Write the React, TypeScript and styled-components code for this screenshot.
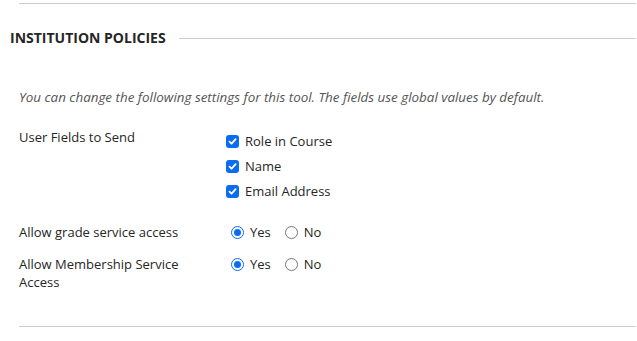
import React from 'react';
import styled, { createGlobalStyle } from 'styled-components';

const GlobalStyle = createGlobalStyle`
    body {
        margin: 0;
        background: #fff;
        font-family: "Open Sans", "Liberation Sans", sans-serif;
        color: #262626;
    }
`;

const Page = styled.div`
    width: 637px;
    height: 341px;
    padding: 3px 1px 0 10px;
    box-sizing: border-box;
`;

const Rule = styled.div`
    height: 1px;
    background: #cdcdcd;
    margin-left: 9px;
`;

const HeadingRow = styled.div`
    display: flex;
    align-items: center;
    margin-top: 25px;
`;

const Heading = styled.h2`
    margin: 0;
    font-size: 14px;
    font-weight: 700;
    line-height: 18px;
    color: #262626;
`;

const HeadingLine = styled.div`
    flex: 1;
    height: 1px;
    background: #cdcdcd;
    margin-left: 13px;
`;

const Body = styled.div`
    padding-left: 9px;
`;

const Intro = styled.p`
    margin: 41px 0 0;
    font-size: 13.4px;
    font-style: italic;
    line-height: 18px;
    color: #555;
`;

const FieldRow = styled.div<{ $top: number }>`
    display: grid;
    grid-template-columns: 207px 1fr;
    margin-top: ${p => p.$top}px;
    font-size: 13px;
    line-height: 18px;
`;

const FieldLabel = styled.div`
    color: #262626;
`;

const OptionList = styled.div`
    display: flex;
    flex-direction: column;
    gap: 7px;
    padding-top: 4px;
`;

const OptionInline = styled.div`
    display: flex;
    align-items: flex-start;
    gap: 14px;
`;

const Option = styled.label`
    display: flex;
    align-items: center;
    gap: 6px;
    color: #262626;
`;

const Box = styled.span`
    width: 13px;
    height: 13px;
    border-radius: 3px;
    background: #0a6cf2;
    display: flex;
    align-items: center;
    justify-content: center;
`;

const Radio = styled.span<{ $on: boolean }>`
    width: 13px;
    height: 13px;
    border-radius: 50%;
    box-sizing: border-box;
    border: 1px solid ${p => (p.$on ? '#0a6cf2' : '#767676')};
    display: flex;
    align-items: center;
    justify-content: center;
    margin-left: ${p => (p.$on ? 5 : 0)}px;
    &::after {
        content: '';
        width: 7px;
        height: 7px;
        border-radius: 50%;
        background: ${p => (p.$on ? '#0a6cf2' : 'transparent')};
    }
`;

const BottomRule = styled(Rule)`
    margin-top: 35px;
`;

const Check = () => (
    <Box>
        <svg width="9" height="9" viewBox="0 0 9 9">
            <path d="M1.5 4.6 L3.6 6.7 L7.6 2.2" stroke="#fff" strokeWidth="1.8" fill="none" strokeLinecap="round" strokeLinejoin="round" />
        </svg>
    </Box>
);

const YesNo = () => (
    <OptionInline>
        <Option><Radio $on={true} />Yes</Option>
        <Option><Radio $on={false} />No</Option>
    </OptionInline>
);

const App = function () {
    const fields = ['Role in Course', 'Name', 'Email Address'];
    return <>
        <GlobalStyle />
        <Page>
            <Rule />
            <HeadingRow>
                <Heading>INSTITUTION POLICIES</Heading>
                <HeadingLine />
            </HeadingRow>
            <Body>
                <Intro>You can change the following settings for this tool. The fields use global values by default.</Intro>
                <FieldRow $top={22}>
                    <FieldLabel>User Fields to Send</FieldLabel>
                    <OptionList>
                        {fields.map(f => <Option key={f}><Check />{f}</Option>)}
                    </OptionList>
                </FieldRow>
                <FieldRow $top={23}>
                    <FieldLabel>Allow grade service access</FieldLabel>
                    <YesNo />
                </FieldRow>
                <FieldRow $top={14}>
                    <FieldLabel>Allow Membership Service<br />Access</FieldLabel>
                    <YesNo />
                </FieldRow>
            </Body>
            <BottomRule />
        </Page>
    </>;
};

export default App;
